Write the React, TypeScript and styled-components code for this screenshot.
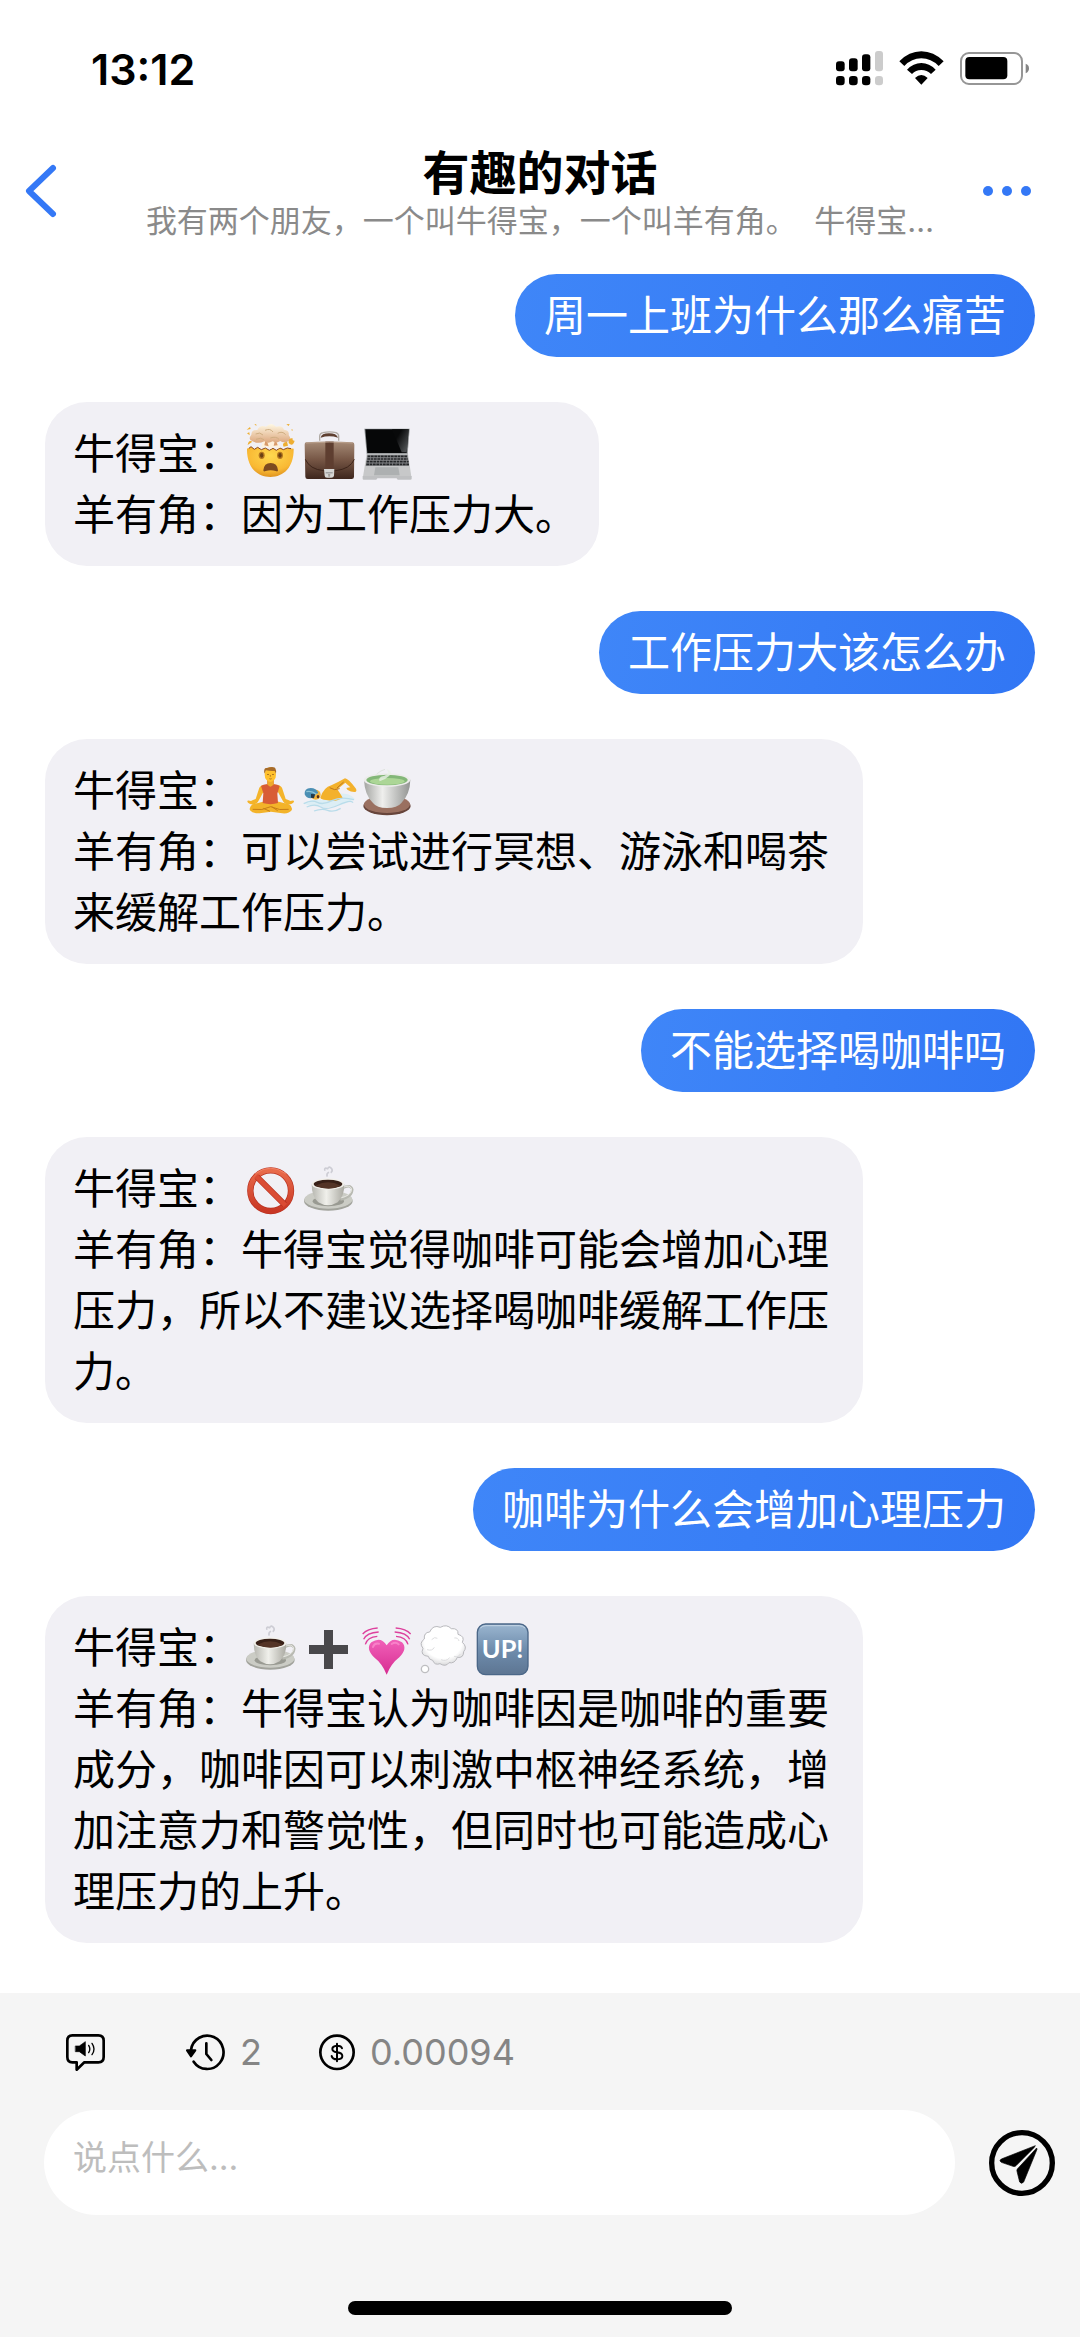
import React from 'react';
import styled, { createGlobalStyle } from 'styled-components';

const GlobalStyle = createGlobalStyle`
  * { box-sizing: border-box; }
  body {
    margin: 0;
    background: #fff;
    color: #000;
    font-family: Inter, "Noto Sans CJK SC", sans-serif;
  }
  button {
    border: 0;
    padding: 0;
    background: none;
    color: inherit;
    font: inherit;
    cursor: pointer;
  }
  svg { display: block; flex: none; }
`;

const Page = styled.div`
  min-height: 100vh;
  display: flex;
  flex-direction: column;
`;

const StatusBar = styled.div`
  height: 137px;
  padding: 0 50px 0 91px;
  display: flex;
  align-items: center;
  justify-content: space-between;
`;

const Clock = styled.time`
  font-size: 43px;
  line-height: 50px;
  font-weight: 600;
`;

const StatusIcons = styled.div`
  display: flex;
  align-items: center;
  gap: 16px;
`;

const NavBar = styled.header`
  height: 107px;
  display: grid;
  grid-template-columns: 120px 1fr 120px;
  align-items: center;
`;

const NavButton = styled.button<{ $side: 'left' | 'right' }>`
  height: 88px;
  padding: 0 ${(p) => (p.$side === 'right' ? 48 : 0)}px 0 ${(p) => (p.$side === 'left' ? 24 : 0)}px;
  display: flex;
  align-items: center;
  justify-content: ${(p) => (p.$side === 'left' ? 'flex-start' : 'flex-end')};
`;

const Heading = styled.div`
  min-width: 0;
  text-align: center;
`;

const Title = styled.h1`
  margin: 0;
  font-size: 47px;
  line-height: 60px;
  font-weight: 700;
`;

const Subtitle = styled.p`
  margin: 0;
  font-size: 31px;
  line-height: 36px;
  color: #8a8a8a;
  white-space: nowrap;
  overflow: hidden;
  text-overflow: ellipsis;
`;

const Messages = styled.main`
  flex: 1;
  padding: 30px 45px 50px;
  display: flex;
  flex-direction: column;
  align-items: flex-start;
  gap: 45px;
`;

const Bubble = styled.div`
  font-size: 42px;
  line-height: 61px;
`;

const Sent = styled(Bubble)`
  align-self: flex-end;
  padding: 11px 29px;
  border-radius: 42px;
  color: #fff;
  background: linear-gradient(100deg, #3f86f8, #3176f4);
`;

const Received = styled(Bubble)`
  max-width: 818px;
  padding: 21px 22px 21px 28px;
  border-radius: 42px;
  background: #f1f0f5;
`;

const Line = styled.p`
  margin: 0;
`;

const EmojiSvg = styled.svg`
  display: inline-block;
  vertical-align: top;
  width: 58px;
  height: 61px;
`;

const Footer = styled.footer`
  padding: 31px 0 22px;
  background: #f5f5f5;
`;

const Tools = styled.div`
  height: 56px;
  margin-bottom: 30px;
  padding-left: 66px;
  display: flex;
  align-items: center;
  gap: 57px;
`;

const Tool = styled.button<{ $extra?: number }>`
  margin-right: ${(p) => p.$extra ?? 0}px;
  display: flex;
  align-items: center;
  gap: 15px;
  font-size: 36px;
  line-height: 44px;
  color: #858585;
`;

const Composer = styled.form`
  padding: 0 25px 0 44px;
  display: flex;
  align-items: center;
  gap: 34px;
`;

const TextBox = styled.input`
  flex: 1;
  min-width: 0;
  height: 105px;
  padding: 0 29px 10px;
  border: 0;
  border-radius: 53px;
  outline: 0;
  background: #fff;
  font: 400 34px/48px Inter, "Noto Sans CJK SC", sans-serif;
  &::placeholder { color: #bdbdbd; opacity: 1; }
`;

const HomeBar = styled.div`
  width: 384px;
  height: 14px;
  margin: 86px auto 0;
  border-radius: 7px;
  background: #000;
`;

type EmojiName =
  | 'explode' | 'briefcase' | 'laptop' | 'yoga' | 'swim' | 'tea'
  | 'ban' | 'coffee' | 'plus' | 'heart' | 'thought' | 'up';

const glyphs: Record<EmojiName, { label: string; art: React.ReactNode }> = {
  explode: {
    label: '🤯',
    art: (
      <>
        <defs>
          <radialGradient id="face" cx=".5" cy=".3" r=".75">
            <stop offset="0" stopColor="#ffd94f" />
            <stop offset=".65" stopColor="#f9b934" />
            <stop offset="1" stopColor="#d98a1c" />
          </radialGradient>
          <linearGradient id="cloud" x1="0" y1="0" x2="0" y2="1">
            <stop offset="0" stopColor="#fff8e3" />
            <stop offset="1" stopColor="#dca77e" />
          </linearGradient>
        </defs>
        <path d="M18 86l12-6 10 8 10-6 11 7 12-5 12 7 11-6 10 6 11-7 10 5 12-5 19 2C159 140 130 171 88 171S17 140 18 86z" fill="url(#face)" />
        <path d="M24 85l6-5 10 8 10-6 11 7 12-5 12 7 11-6 10 6 11-7 10 5 12-5 11 2" fill="none" stroke="#8a4620" strokeWidth="3" />
        <path d="M60 83q5-18 10-27h36q4 16 13 26l-10 4-9-7-10 7-11-6z" fill="#fff1db" />
        <path d="M70 76l5-22 8 25zM98 77l5-21 7 20z" fill="#d99a69" />
        <path d="M35 64q-16-6-4-20 0-16 18-14 8-17 26-10 16-16 30 0 19-5 24 9 17 2 14 16 12 16-5 20-11 5-20-2-12 8-23 1-15 8-25 0-18 9-35 0z" fill="url(#cloud)" />
        <path d="M44 42q13-7 22 3m6-14q16-7 24 5m14 4q14-8 24 4m-89 14q15-7 24 1m19-5q17-6 26 4" fill="none" stroke="#cfae82" strokeWidth="3" />
        <path d="M17 29l10-8 2 6zm1 11l7-3 1 9zm118-27l10-1-3 6zm15 15l5 1-3 4zM40 14l5-2 2 5zM20 75q3-17 14-10zm123-6q-1-16 12-14-2 8 6 7-6 20-18 7zM128 80q-7-12 10-15l3 12z" fill="#eeae31" />
        <ellipse cx="62" cy="106" rx="9" ry="11" fill="#b4761f" />
        <ellipse cx="62" cy="106" rx="5" ry="7" fill="#6a4014" />
        <ellipse cx="117" cy="106" rx="9" ry="11" fill="#b4761f" />
        <ellipse cx="117" cy="106" rx="5" ry="7" fill="#6a4014" />
        <path d="M67 151q2-22 22-22t22 22q0 5-7 2-15-5-30 0-7 3-7-2z" fill="#7c4a20" />
      </>
    ),
  },
  briefcase: {
    label: '💼',
    art: (
      <>
        <defs>
          <linearGradient id="case" x1="0" y1="0" x2="0" y2="1">
            <stop offset="0" stopColor="#a58a76" />
            <stop offset=".5" stopColor="#755544" />
            <stop offset="1" stopColor="#3e261d" />
          </linearGradient>
        </defs>
        <path d="M62 62V49q0-9 10-11 20-5 39 0 8 3 8 11v13" fill="none" stroke="#b0aaa4" strokeWidth="4" />
        <path d="M65 53q2-13 25-13t27 13q-26-8-52 0z" fill="#5e3f30" />
        <path d="M21 67q70-5 140 0 5 1 5 7l-1 96q0 7-7 7H26q-7 0-7-7l-2-96q0-6 4-7z" fill="url(#case)" />
        <path d="M79 65h25v85H79z" fill="#5e3e30" />
        <path d="M19 118q13 30 55 34h36q43-5 56-34" fill="none" stroke="#3c241a" strokeWidth="3" />
        <path d="M21 69q70-5 140 0" fill="none" stroke="#c5ae9a" strokeWidth="2" />
        <path d="M75 147h31l-1 20q-1 6-8 6H84q-7 0-7-6z" fill="#d6d6d4" />
        <path d="M80 157h21v3H80z" fill="#888" />
        <path d="M87 162h7l-1 8h-5z" fill="#a4a09b" />
      </>
    ),
  },
  laptop: {
    label: '💻',
    art: (
      <>
        <defs>
          <linearGradient id="screen" x1="0" y1="0" x2="1" y2=".8">
            <stop offset=".35" stopColor="#08090a" />
            <stop offset=".95" stopColor="#4d5052" />
          </linearGradient>
        </defs>
        <path d="M22 26h136l-6 76H29z" fill="#8d9092" />
        <path d="M25 28h130l-6 71H31z" fill="#060708" />
        <path d="M105 28h50l-6 69H134z" fill="url(#screen)" />
        <path d="M29 101h124l10 69H18z" fill="#c7c8c9" />
        <path d="M31 104h121l4 34H26z" fill="#85878a" />
        <path d="M32 109h120M31 117h122M29 125h126M28 133h128" stroke="#242628" strokeWidth="5" strokeDasharray="8 2" />
        <path d="M55 142h69l4 24H51z" fill="#adb0b1" />
        <path d="M17 168h147v8q0 3-4 3h-37q-3 0-4-4H61q-1 4-4 4H20q-3 0-3-3z" fill="#bfc0c2" />
      </>
    ),
  },
  yoga: {
    label: '🧘',
    art: (
      <>
        <path d="M67 84q-11 2-14 14l-9 28q-9 3-14 6-16-4-9 5 7 7 18 5 9-2 12-8l19-34zm43 0q12 2 15 14l9 28q9 3 14 6 16-4 9 5-7 7-18 5-9-2-12-8l-19-34z" fill="#f4b42b" />
        <path d="M75 132l-40 10q-12 8-8 18 8 10 29 9l34-5 34 5q20 2 28-9 4-10-8-18l-40-10z" fill="#f3b329" />
        <path d="M35 157q28 5 54-8 27 13 54 8M67 154l20 9m5-14l18 12" fill="none" stroke="#c77e17" strokeWidth="3" />
        <path d="M79 64h19v17q13 2 18 6l-7 23 2 28q-22 7-46 0l2-29-7-22q6-4 19-6z" fill="#d85d35" />
        <path d="M79 68h19v14q-10 14-19 0z" fill="#eda92b" />
        <ellipse cx="88" cy="53" rx="17" ry="22" fill="#ffc12d" />
        <path d="M70 50q-3-18 7-17 25-7 27 4 3 6 1 13l-4-8q-14 1-26-2z" fill="#a76b28" />
        <path d="M78 52q3 2 6 0m9 0q3 2 6 0m-14 13q4 2 7 0m-4-11v5" fill="none" stroke="#8c5518" strokeWidth="2" />
      </>
    ),
  },
  swim: {
    label: '🏊',
    art: (
      <>
        <path d="M16 138q26-15 54-8l37-19q42-5 58 12 7 6-12 9-40 24-104 16-35-5-33-10z" fill="#dceef5" />
        <path d="M64 122q10-31 33-37 20-9 41-21 9 0 33 31 4 10-5 10-10 0-21-7l-3-5q9-1 12-2l-15-14-24 20q10 15 16 25-18 14-50 7-14-1-17-7z" fill="#f3b12c" />
        <path d="M92 92q14 10 30 3m-8-2l20-18" fill="none" stroke="#bd771f" strokeWidth="3" />
        <circle cx="50" cy="113" r="15" fill="#f4b53c" />
        <path d="M17 112q-2-18 18-19 17 0 23 15-9 2-13 11l-8 5q-15 1-20-12z" fill="#4b8fb4" />
        <path d="M22 104q16-4 30 8" stroke="#8ec4d5" strokeWidth="4" fill="none" />
        <path d="M36 111l12 1-3 12-9-2z" fill="#23394a" />
        <ellipse cx="57" cy="119" rx="4" ry="5" fill="#593017" />
        <path d="M14 140q24-13 41-4t44-5 66-3M23 150q25-11 42 0t54-6 43-7M45 162q23-9 41-2t39-6" fill="none" stroke="#b9dcea" strokeWidth="4" />
      </>
    ),
  },
  tea: {
    label: '🍵',
    art: (
      <>
        <defs>
          <linearGradient id="bowl">
            <stop offset="0" stopColor="#a4a5a2" />
            <stop offset=".4" stopColor="#efefed" />
            <stop offset="1" stopColor="#929492" />
          </linearGradient>
        </defs>
        <ellipse cx="90" cy="147" rx="71" ry="28" fill="#67453b" />
        <ellipse cx="90" cy="142" rx="69" ry="26" fill="#9a7060" />
        <path d="M21 68q2 46 27 70 11 15 42 15t43-15q26-26 27-70z" fill="url(#bowl)" />
        <ellipse cx="90" cy="69" rx="70" ry="20" fill="#ececea" />
        <ellipse cx="90" cy="69" rx="62" ry="16" fill="#83b778" />
        <ellipse cx="91" cy="73" rx="52" ry="10" fill="#acd696" />
        <path d="M68 73q-7-13 15-17 18-8 5-20 23 8 8 21-12 12-28 16z" fill="#e9f0e6" opacity=".8" />
        <path d="M59 51q13-11 25-14" fill="none" stroke="#dfe2df" strokeWidth="3" />
      </>
    ),
  },
  ban: {
    label: '🚫',
    art: (
      <>
        <defs>
          <linearGradient id="ring" x1="0" y1="0" x2="0" y2="1">
            <stop offset="0" stopColor="#e96b4b" />
            <stop offset="1" stopColor="#c93724" />
          </linearGradient>
        </defs>
        <circle cx="89" cy="107" r="61" fill="none" stroke="#b93120" strokeWidth="19" />
        <circle cx="89" cy="107" r="61" fill="none" stroke="url(#ring)" strokeWidth="15" />
        <path d="M47 65l84 84" stroke="#b93120" strokeWidth="18" />
        <path d="M45 63l88 88" stroke="#da4c34" strokeWidth="14" />
        <path d="M43 56q46-33 91 0" fill="none" stroke="#f28c70" strokeWidth="3" opacity=".7" />
      </>
    ),
  },
  coffee: {
    label: '☕',
    art: (
      <>
        <defs>
          <linearGradient id="cup">
            <stop offset="0" stopColor="#b7b7b0" />
            <stop offset=".45" stopColor="#f0f0eb" />
            <stop offset="1" stopColor="#aaa9a1" />
          </linearGradient>
        </defs>
        <ellipse cx="88" cy="138" rx="73" ry="29" fill="#a2a39c" />
        <ellipse cx="88" cy="134" rx="72" ry="27" fill="#cbccc5" />
        <ellipse cx="88" cy="139" rx="47" ry="15" fill="#999a92" />
        <path d="M130 100q24-14 30 3 0 23-36 31" fill="none" stroke="#b8b9b1" strokeWidth="7" />
        <path d="M130 98q22-11 28 4 0 20-34 27" fill="none" stroke="#e7e7e2" strokeWidth="3" />
        <path d="M38 88q0 37 20 54 29 18 58 0 20-18 20-54z" fill="url(#cup)" />
        <ellipse cx="87" cy="87" rx="49" ry="17" fill="#f2f0ea" />
        <ellipse cx="87" cy="87" rx="43" ry="13" fill="#382017" />
        <path d="M50 92q37-20 75 0-34 18-75 0z" fill="#543426" />
        <path d="M85 65q-4-9 5-13m-12-5q-4-11 8-6 5-10 13 2 2 7-4 10" fill="none" stroke="#cdcdd4" strokeWidth="5" />
      </>
    ),
  },
  plus: {
    label: '➕',
    art: <path d="M75 48h27v45h45v27h-45v45H75v-45H30V93h45z" fill="#49484b" />,
  },
  heart: {
    label: '💓',
    art: (
      <>
        <defs>
          <linearGradient id="love" x1="0" y1="0" x2="0" y2="1">
            <stop offset="0" stopColor="#f161b9" />
            <stop offset="1" stopColor="#d72c91" />
          </linearGradient>
        </defs>
        <path d="M89 182q-14-34-38-52-26-26-8-45 29-19 46 9 17-28 46-9 18 19-8 45-24 18-38 52z" fill="url(#love)" />
        <path d="M48 99q4-13 18-10m38 1q12-8 21 1" fill="none" stroke="#ff9bd6" strokeWidth="6" strokeLinecap="round" opacity=".6" />
        <path d="M25 91q6-22 36-24M20 76q9-20 45-22M17 60q14-16 45-18m91 49q-6-22-36-24m41 9q-9-20-45-22m48 6q-14-16-45-18" fill="none" stroke="#dd409d" strokeWidth="4" />
      </>
    ),
  },
  thought: {
    label: '💭',
    art: (
      <>
        <defs>
          <radialGradient id="puff" cx=".5" cy=".4" r=".65">
            <stop offset=".65" stopColor="#fff" />
            <stop offset="1" stopColor="#cfcfd1" />
          </radialGradient>
        </defs>
        <path d="M40 127q-26-2-16-24-13-16 4-28-2-20 16-21 10-23 32-14 19-11 33 4 22-2 20 17 22 6 13 24 16 14 4 28 0 20-19 17-8 20-25 16-10 14-27 3-16 6-22-10-12-2-13-12z" fill="url(#puff)" stroke="#b9b9bd" strokeWidth="3" />
        <circle cx="30" cy="165" r="11" fill="#fff" stroke="#bebec1" strokeWidth="4" />
        <path d="M36 107q16 5 22-7m20 37q15 7 26-6m13-4q14 4 19-7M50 77q9-10 17-4m51-1q11-2 14 9" fill="none" stroke="#dedee0" strokeWidth="3" />
      </>
    ),
  },
  up: {
    label: '🆙',
    art: (
      <>
        <defs>
          <linearGradient id="sign" x1="0" y1="0" x2="0" y2="1">
            <stop offset="0" stopColor="#9bb6d0" />
            <stop offset=".5" stopColor="#6f8dad" />
            <stop offset="1" stopColor="#5d7592" />
          </linearGradient>
        </defs>
        <rect x="13" y="30" width="152" height="152" rx="25" fill="url(#sign)" stroke="#4b6788" strokeWidth="4" />
        <path d="M22 42q7-7 17-7h100q10 0 17 7" fill="none" stroke="#c4d5e5" strokeWidth="3" />
        <text x="89" y="133" textAnchor="middle" fontFamily="Lato, sans-serif" fontWeight="700" fontSize="76" fill="#fff">UP!</text>
      </>
    ),
  },
};

function Emoji({ name }: { name: EmojiName }) {
  const glyph = glyphs[name];
  return (
    <EmojiSvg viewBox="0 9 174 183" role="img" aria-label={glyph.label}>
      {glyph.art}
    </EmojiSvg>
  );
}

interface Exchange {
  question: string;
  emojis: EmojiName[];
  answer: string;
}

const exchanges: Exchange[] = [
  {
    question: '周一上班为什么那么痛苦',
    emojis: ['explode', 'briefcase', 'laptop'],
    answer: '因为工作压力大。',
  },
  {
    question: '工作压力大该怎么办',
    emojis: ['yoga', 'swim', 'tea'],
    answer: '可以尝试进行冥想、游泳和喝茶来缓解工作压力。',
  },
  {
    question: '不能选择喝咖啡吗',
    emojis: ['ban', 'coffee'],
    answer: '牛得宝觉得咖啡可能会增加心理压力，所以不建议选择喝咖啡缓解工作压力。',
  },
  {
    question: '咖啡为什么会增加心理压力',
    emojis: ['coffee', 'plus', 'heart', 'thought', 'up'],
    answer: '牛得宝认为咖啡因是咖啡的重要成分，咖啡因可以刺激中枢神经系统，增加注意力和警觉性，但同时也可能造成心理压力的上升。',
  },
];

export default function App() {
  return (
    <Page>
      <GlobalStyle />
      <StatusBar>
        <Clock>13:12</Clock>
        <StatusIcons>
          <svg width="47" height="35" viewBox="111 65 141 105" aria-hidden="true">
            <g fill="#000">
              <rect x="111" y="96" width="26" height="30" rx="9" />
              <rect x="150" y="87" width="26" height="39" rx="9" />
              <rect x="189" y="75" width="25" height="51" rx="9" />
              <rect x="111" y="140" width="26" height="28" rx="10" />
              <rect x="150" y="140" width="26" height="28" rx="10" />
              <rect x="189" y="140" width="25" height="28" rx="10" />
            </g>
            <g fill="#ccc">
              <rect x="228" y="65" width="24" height="61" rx="9" />
              <rect x="228" y="140" width="24" height="28" rx="10" />
            </g>
          </svg>
          <svg width="45" height="35" viewBox="299 62 135 105" aria-hidden="true">
            <path d="M300 93q29-30 66-30t67 30l-15 14q-23-23-52-23t-51 23zM323 118q19-20 43-20t43 20l-14 13q-12-12-29-12t-28 12zM347 143q19-18 38 0l-19 20z" />
          </svg>
          <svg width="70" height="35" viewBox="480 63 210 105" aria-hidden="true">
            <rect x="483" y="69" width="183" height="93" rx="24" fill="#fff" stroke="#969696" strokeWidth="6" />
            <rect x="496" y="81" width="126" height="67" rx="12" />
            <path d="M677 101q10 3 10 14t-10 15z" fill="#858585" />
          </svg>
        </StatusIcons>
      </StatusBar>

      <NavBar>
        <NavButton $side="left" type="button" aria-label="返回">
          <svg width="34" height="56" viewBox="0 0 34 56" fill="none" stroke="#3478f6" strokeWidth="6" strokeLinecap="round" strokeLinejoin="round">
            <path d="M29 5L5 28l24 23" />
          </svg>
        </NavButton>
        <Heading>
          <Title>有趣的对话</Title>
          <Subtitle>我有两个朋友，一个叫牛得宝，一个叫羊有角。&nbsp;&nbsp;牛得宝…</Subtitle>
        </Heading>
        <NavButton $side="right" type="button" aria-label="更多">
          <svg width="50" height="12" viewBox="0 0 50 12" fill="#3478f6">
            <circle cx="6" cy="6" r="5" />
            <circle cx="25" cy="6" r="5" />
            <circle cx="44" cy="6" r="5" />
          </svg>
        </NavButton>
      </NavBar>

      <Messages>
        {exchanges.map((item) => (
          <React.Fragment key={item.question}>
            <Sent>{item.question}</Sent>
            <Received>
              <Line>
                牛得宝：
                {item.emojis.map((name) => (
                  <Emoji key={name} name={name} />
                ))}
              </Line>
              <Line>{`羊有角：${item.answer}`}</Line>
            </Received>
          </React.Fragment>
        ))}
      </Messages>

      <Footer>
        <Tools>
          <Tool type="button" $extra={24} aria-label="朗读">
            <svg width="39" height="37" viewBox="79 71 117 111" fill="none" stroke="#000" strokeWidth="8" strokeLinejoin="round" strokeLinecap="round">
              <path d="M98 75h78q16 0 16 16v49q0 16-16 16h-42l-23 22v-22H98q-15 0-15-16V91q0-16 15-16z" />
              <path d="M108 107h11l18-13v43l-18-13h-11z" fill="#000" strokeWidth="2" />
              <path d="M147 105q7 11 0 22m10-28q12 17 0 34" strokeWidth="4" />
            </svg>
          </Tool>
          <Tool type="button" aria-label="历史 2">
            <svg width="39" height="37" viewBox="438 71 117 111" fill="none" stroke="#000" strokeWidth="8" strokeLinecap="round" strokeLinejoin="round">
              <path d="M453 119a49 50 0 1 1 8 35" />
              <path d="M441 120h25l-13 18z" fill="#000" strokeWidth="6" />
              <path d="M499 99v32l15 18" />
            </svg>
            <span>2</span>
          </Tool>
          <Tool type="button" aria-label="费用 0.00094">
            <svg width="36" height="37" viewBox="837 71 108 111" fill="none" stroke="#000" strokeLinecap="round">
              <circle cx="891" cy="126" r="50" strokeWidth="8" />
              <path d="M891 100v53M906 114q-2-8-15-8-14 1-14 10 0 8 14 10 16 2 16 11 0 10-16 10-14 0-16-10" strokeWidth="6" />
            </svg>
            <span>0.00094</span>
          </Tool>
        </Tools>
        <Composer onSubmit={(e) => e.preventDefault()}>
          <TextBox type="text" aria-label="消息" placeholder="说点什么..." />
          <button type="submit" aria-label="发送">
            <svg width="66" height="68" viewBox="147 145 198 204">
              <circle cx="246" cy="247" r="91" fill="none" stroke="#000" strokeWidth="16" />
              <path d="M286 195L184 235q-8 5 0 10l35 12q5 2 9-2l54-54zM290 202l-58 63q-2 3-1 7l8 32q5 8 12 0l40-98z" stroke="#000" strokeWidth="2" strokeLinejoin="round" />
            </svg>
          </button>
        </Composer>
        <HomeBar />
      </Footer>
    </Page>
  );
}
